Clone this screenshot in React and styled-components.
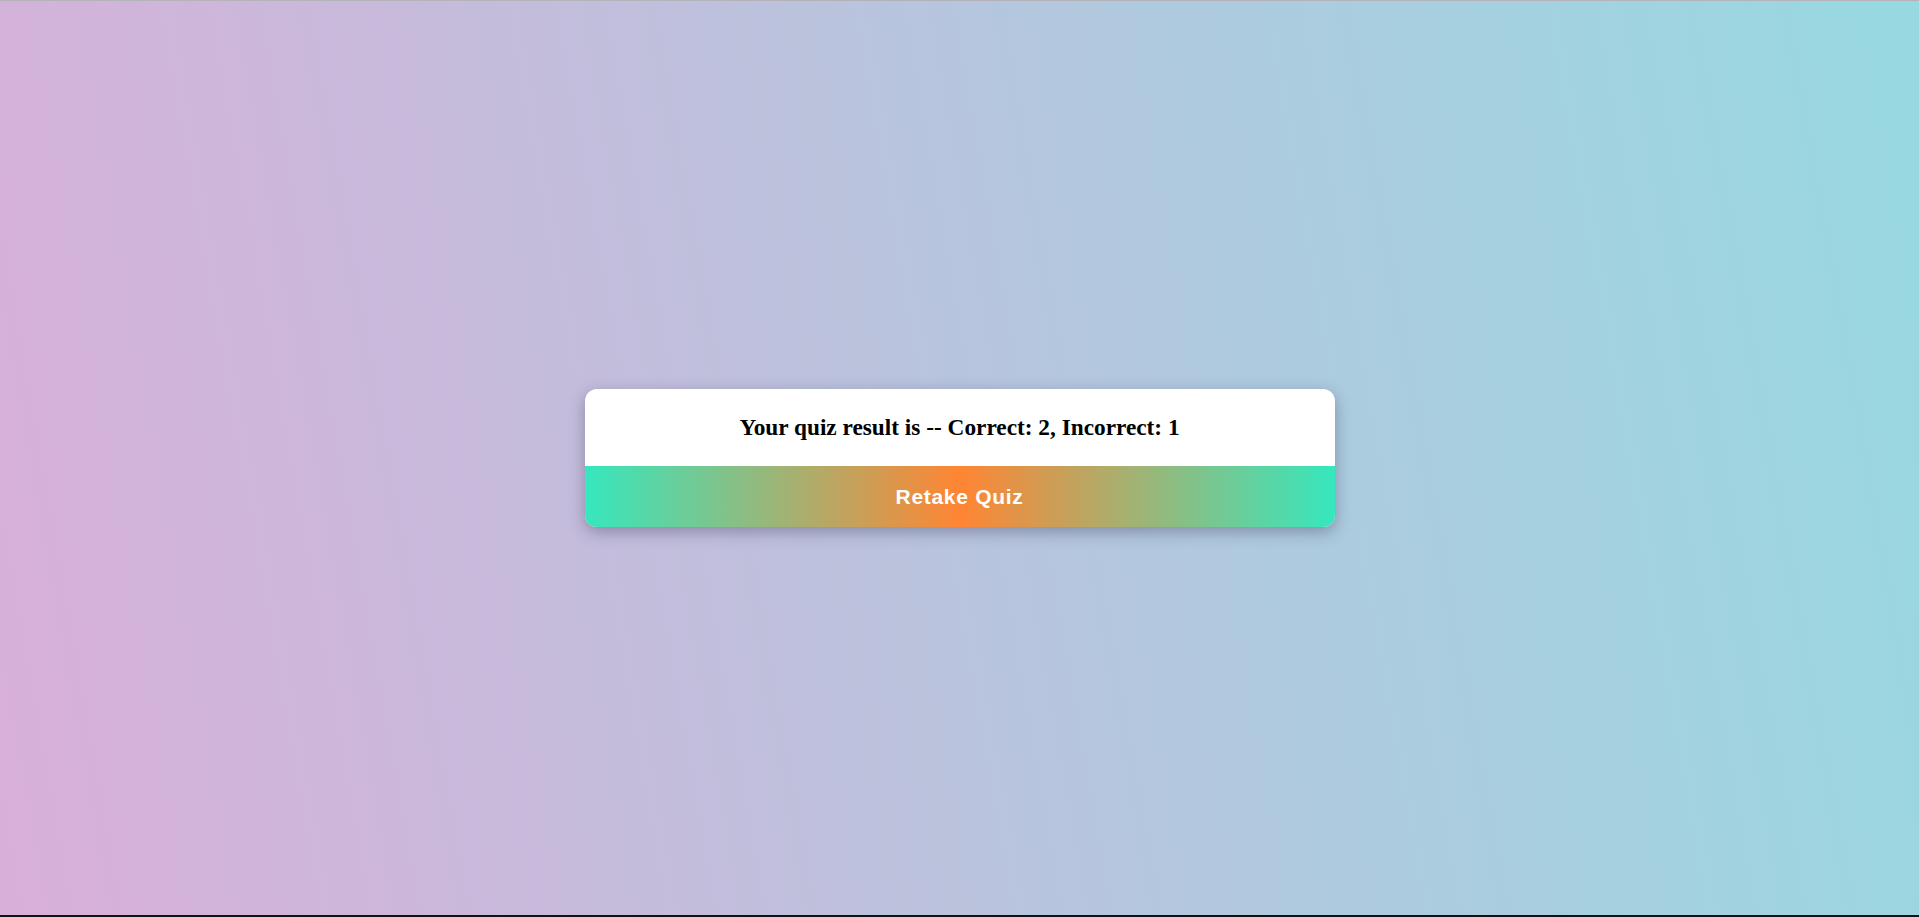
import React from 'react';
import styled, { createGlobalStyle } from 'styled-components';

const GlobalStyle = createGlobalStyle`
    html, body {
        margin: 0;
        padding: 0;
    }
    * {
        box-sizing: border-box;
    }
`

const Page = styled.div`
    min-height: 100vh;
    display: flex;
    align-items: center;
    justify-content: center;
    background-color: #D9AFD9;
    background-image: linear-gradient(80deg, #D9AFD9 0%, #97D9E1 100%);
    border-top: 1px solid #b4b4b8;
    border-bottom: 2px solid #111;
`

const Card = styled.div`
    width: 750px;
    background: #fff;
    border-radius: 12px;
    overflow: hidden;
    box-shadow: 0 5px 16px rgba(60, 60, 90, 0.42);
    display: flex;
    flex-direction: column;
`

const Result = styled.h2`
    margin: 0;
    height: 77px;
    display: flex;
    align-items: center;
    justify-content: center;
    font-family: "Liberation Serif", "Times New Roman", serif;
    font-size: 23.3px;
    font-weight: bold;
    color: #000;
`

const RetakeButton = styled.button`
    height: 61px;
    border: none;
    cursor: pointer;
    background: linear-gradient(90deg, #36e7be 0%, #ff8533 50%, #36e7be 100%);
    color: #fff;
    font-family: "Liberation Sans", Arial, sans-serif;
    font-size: 21px;
    font-weight: bold;
    letter-spacing: 0.7px;
    :hover { opacity: 0.95; }
`

export default function App() {
    const score = { correct: 2, incorrect: 1 };
    return (
        <>
            <GlobalStyle />
            <Page>
                <Card>
                    <Result>
                        Your quiz result is -- Correct: {score.correct}, Incorrect: {score.incorrect}
                    </Result>
                    <RetakeButton>Retake Quiz</RetakeButton>
                </Card>
            </Page>
        </>
    );
}
